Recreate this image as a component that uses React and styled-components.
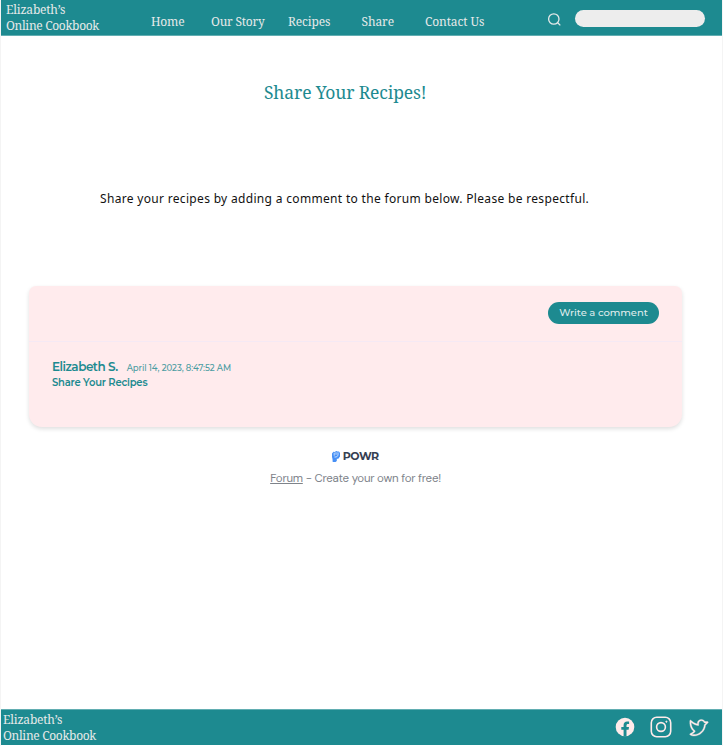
import React from "react";
import styled, { createGlobalStyle } from "styled-components";
import { PiTwitterLogo } from "react-icons/pi";

const teal = "#1d8a90";
const serif = `"Noto Serif", "DejaVu Serif Condensed", "DejaVu Serif", serif`;
const round = `"Montserrat", "Inter", sans-serif`;

const GlobalStyle = createGlobalStyle`
  * { box-sizing: border-box; }
  body { margin: 0; background: #fff; }
`;
const Page = styled.div`
  width: 723px;
  height: 746px;
  border-left: 1px solid #f4f4f4;
  border-right: 1px solid #f4f4f4;
  padding: 0 0 1px;
  display: flex;
  flex-direction: column;
  overflow: hidden;
`;
const Text = styled.span`
  display: block;
  white-space: nowrap;
  letter-spacing: ${(p) => p.$track || 0}px;
`;
const Bar = styled.header`
  height: 36px;
  flex: none;
  display: flex;
  background: ${teal};
  color: #e6e9e9;
  font: 400 12px/16px ${serif};
  border-bottom: 1px solid #62aeb2;
`;
const Brand = styled.div`
  width: 150px;
  padding: 2px 0 0 5px;
`;
const Nav = styled.nav`
  display: flex;
  width: 396px;
  padding-top: 14px;
`;
const NavItem = styled.a`
  width: ${(p) => p.$w}px;
  white-space: nowrap;
  letter-spacing: ${(p) => p.$track}px;
`;
const SearchIcon = styled.svg`
  width: 15px;
  height: 15px;
  margin-top: 12px;
`;
const SearchField = styled.div`
  width: 130px;
  height: 17px;
  margin: 10px 0 0 13px;
  border-radius: 9px;
  background: #ededed;
`;
const Main = styled.main`
  flex: 1;
  display: flex;
  flex-direction: column;
`;
const Title = styled.h1`
  margin: 44px 0 0 263px;
  font: 400 17.5px/24px ${serif};
  color: ${teal};
  white-space: nowrap;
  letter-spacing: -0.15px;
`;
const Intro = styled.p`
  margin: 86px 0 0 99px;
  font: 12px/18px "Noto Sans", sans-serif;
  color: #111;
  white-space: nowrap;
  letter-spacing: 0.32px;
`;
const Card = styled.section`
  width: 653px;
  height: 141px;
  margin: 78px 0 0 28px;
  border-radius: 7px 7px 13px 13px;
  background: #ffebed;
  box-shadow: 0 2px 4px 0 rgba(0, 0, 0, 0.13);
  color: ${teal};
  font-family: ${round};
`;
const CardHead = styled.div`
  height: 56px;
  border-bottom: 1px solid #f5e9f4;
  display: flex;
  justify-content: flex-end;
  padding: 16px 23px 0 0;
`;
const Button = styled.button`
  width: 111px;
  height: 22px;
  padding: 0;
  display: flex;
  align-items: center;
  justify-content: center;
  border: 0;
  border-radius: 11px;
  background: ${teal};
  color: #dfebeb;
  font: 500 10px/22px ${round};
  letter-spacing: -0.05px;
`;
const Comment = styled.article`
  padding: 17px 0 0 23px;
`;
const Meta = styled.div`
  display: flex;
  align-items: baseline;
  gap: 9px;
  height: 16px;
`;
const Author = styled(Text)`
  font: 600 12px/16px ${round};
`;
const Stamp = styled(Text)`
  font: 500 8.5px/16px ${round};
  color: #4b9ca2;
`;
const Subject = styled(Text)`
  font: 600 10px/16px ${round};
`;
const Credit = styled.div`
  width: 709px;
  padding-top: 21px;
  display: flex;
  flex-direction: column;
  align-items: center;
  font-family: ${round};
`;
const PowrRow = styled.div`
  display: flex;
  align-items: center;
  gap: 2.5px;
  height: 16px;
  color: #354052;
  font-size: 11px;
  font-weight: 700;
`;
const Pitch = styled(Text)`
  margin-top: 6px;
  font: 11.5px/18px "DM Sans", "Inter", sans-serif;
  color: #7e838a;
`;
const Footer = styled(Bar).attrs({ as: "footer" })`
  border-top: 1px solid #62aeb2;
  border-bottom: 0;
  justify-content: space-between;
`;
const FooterBrand = styled(Brand)`
  padding: 2px 0 0 2px;
`;
const Social = styled.div`
  display: flex;
  align-items: center;
  gap: 15px;
  padding: 0 13px 2px 0;
  color: #ffebea;
`;
const Bird = styled(PiTwitterLogo)`
  stroke: currentColor;
  stroke-width: 4px;
`;

const links = [
  ["Home", 60, -0.2], ["Our Story", 77, -0.2], ["Recipes", 73.5, -0.15],
  ["Share", 63.5, -0.1], ["Contact Us", 100, -0.1],
];

export default function App() {
  return (
    <Page>
      <GlobalStyle />
      <Bar>
        <Brand><Text $track={-0.2}>Elizabeth’s</Text><Text $track={-0.33}>Online Cookbook</Text></Brand>
        <Nav>{links.map(([t, w, k]) => <NavItem key={t} $w={w} $track={k}>{t}</NavItem>)}</Nav>
        <SearchIcon viewBox="0 0 15 15" fill="none" stroke="currentColor" strokeWidth="1.3">
          <circle cx="6.8" cy="7" r="5.2" /><path d="m10.7 10.8 2.6 2.6" />
        </SearchIcon>
        <SearchField />
      </Bar>
      <Main>
        <Title>Share Your Recipes!</Title>
        <Intro>Share your recipes by adding a comment to the forum below. Please be respectful.</Intro>
        <Card>
          <CardHead><Button>Write a comment</Button></CardHead>
          <Comment>
            <Meta><Author $track={-0.5}>Elizabeth S.</Author><Stamp $track={-0.07}>April 14, 2023, 8:47:52 AM</Stamp></Meta>
            <Subject $track={-0.2}>Share Your Recipes</Subject>
          </Comment>
        </Card>
        <Credit>
          <PowrRow>
            <svg width="8" height="11" viewBox="0 0 8 11">
              <path d="M0 2.5 1.4.7 2.8 1 4.2 0 5.5.6 7 .5 8 2v3.5L6.3 7.7H4.8V10L3.6 11H.7L.5 8 0 6z" fill="#468ff5" />
              <path d="M2.2 1.7v3M4 1.2v2.6M6 1.4v2.8L4.5 6H2.4" fill="none" stroke="#e6f2ff" strokeWidth=".8" />
            </svg>
            <Text $track={-0.45}>POWR</Text>
          </PowrRow>
          <Pitch $track={-0.23}><u>Forum</u> - Create your own for free!</Pitch>
        </Credit>
      </Main>
      <Footer>
        <FooterBrand><Text $track={-0.2}>Elizabeth’s</Text><Text $track={-0.33}>Online Cookbook</Text></FooterBrand>
        <Social>
          <svg width="20" height="20" viewBox="0 0 20 20">
            <circle cx="10" cy="10" r="9.3" fill="currentColor" />
            <path d="M8.6 19.5v-6.7H6.3v-2.7h2.3V8c0-2.4 1.4-3.6 3.5-3.6l2 .2v2.3H13c-1.2 0-1.5.7-1.5 1.5v1.7H14l-.4 2.7h-2.1v6.7z" fill={teal} />
          </svg>
          <svg width="22" height="22" viewBox="0 0 22 22" fill="none" stroke="currentColor" strokeWidth="1.6">
            <rect x="1.3" y="1.3" width="19.4" height="19.4" rx="5.4" />
            <circle cx="11" cy="11" r="4.4" /><circle cx="16.4" cy="5.7" r=".6" fill="currentColor" strokeWidth="1" />
          </svg>
          <Bird size={22} />
        </Social>
      </Footer>
    </Page>
  );
}
